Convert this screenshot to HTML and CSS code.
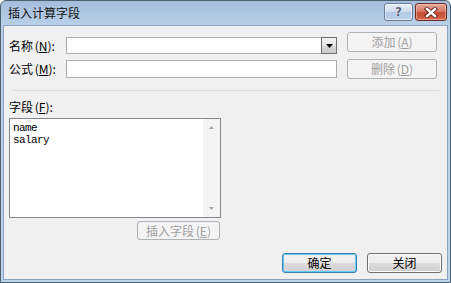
FILE: index.html
```html
<!DOCTYPE html>
<html lang="zh-CN">
<head>
    <meta charset="UTF-8">
    <title>插入计算字段</title>
    <link rel="stylesheet" href="styles.css">
</head>
<body>

<div class="dialog">
    <div class="titlebar">
        <span class="title">插入计算字段</span>
        <div class="caption-buttons">
            <div class="cap help"><span>?</span></div>
            <div class="cap close">
                <svg width="14" height="11" viewBox="0 0 14 11">
                    <path d="M3 2 L11 9 M11 2 L3 9" stroke="#5a1d12" stroke-width="4.2" stroke-linecap="square"/>
                    <path d="M3 2 L11 9 M11 2 L3 9" stroke="#ffffff" stroke-width="2.4" stroke-linecap="square"/>
                </svg>
            </div>
        </div>
    </div>

    <div class="client">
        <div class="top">
            <div class="fields">
                <label>名称 (<u>N</u>):</label>
                <div class="combo">
                    <span class="combo-btn">
                        <svg width="7" height="4" viewBox="0 0 7 4"><path d="M0 0 H7 L3.5 4 Z" fill="#000"/></svg>
                    </span>
                </div>
                <label>公式 (<u>M</u>):</label>
                <div class="textbox"></div>
            </div>
            <div class="actions">
                <button class="btn disabled">添加 (<u>A</u>)</button>
                <button class="btn disabled">删除 (<u>D</u>)</button>
            </div>
        </div>

        <div class="separator"></div>

        <div class="list-label">字段 (<u>F</u>):</div>
        <div class="list-area">
            <div class="listbox">
                <ul class="items">
                    <li>name</li>
                    <li>salary</li>
                </ul>
                <div class="scrollbar">
                    <span class="arrow"><svg width="5" height="3" viewBox="0 0 5 3"><path d="M2.5 0 L5 3 H0 Z" fill="#a6a6a6"/></svg></span>
                    <span class="arrow"><svg width="5" height="3" viewBox="0 0 5 3"><path d="M0 0 H5 L2.5 3 Z" fill="#a6a6a6"/></svg></span>
                </div>
            </div>
            <button class="btn disabled insert">插入字段 (<u>E</u>)</button>
        </div>

        <div class="footer">
            <button class="btn default">确定</button>
            <button class="btn">关闭</button>
        </div>
    </div>
</div>

</body>
</html>
```

FILE: styles.css
```css
body {
    margin: 0;
    background-color: #ffffff;
    font-family: "Noto Sans CJK SC", "Noto Sans", sans-serif;
    font-size: 12px;
    color: #000000;
}

.dialog {
    width: 451px;
    height: 283px;
    box-sizing: border-box;
    border: 1px solid #4f5f72;
    border-radius: 6px 6px 0 0;
    background: linear-gradient(180deg, #a5bddb 0px, #bad0e9 24px, #bcd3ec 100%);
    padding: 0 2px 2px 2px;
    display: flex;
    flex-direction: column;
}

.titlebar {
    height: 24px;
    display: flex;
    justify-content: space-between;
    align-items: flex-start;
}

.title {
    padding-left: 5px;
    line-height: 24px;
    font-size: 12px;
    color: #111111;
}

.caption-buttons {
    display: flex;
    gap: 2px;
    margin-top: 2px;
    margin-right: 1px;
}

.cap {
    height: 18px;
    box-sizing: border-box;
    border-radius: 3px;
    display: flex;
    align-items: center;
    justify-content: center;
}

.help {
    width: 29px;
    border: 1px solid #6b7e98;
    background: linear-gradient(180deg, #e6eef8 0%, #ccdbed 50%, #b3c8e2 51%, #bcd1ea 100%);
    box-shadow: inset 0 0 0 1px rgba(255, 255, 255, 0.5);
}

.help span {
    font-family: "DejaVu Sans", sans-serif;
    font-weight: bold;
    font-size: 12px;
    line-height: 12px;
    color: #56657a;
    text-shadow: 0 0 1px #ffffff, 0 0 1px #ffffff;
}

.close {
    width: 32px;
    border: 1px solid #6e2a20;
    background: linear-gradient(180deg, #e8a999 0%, #d77a66 45%, #c64a33 55%, #d06a52 100%);
    box-shadow: inset 0 0 0 1px rgba(255, 220, 210, 0.45);
}

.client {
    flex: 1;
    background-color: #f0f0f0;
    border: 1px solid #8aa3c0;
    display: flex;
    flex-direction: column;
    padding: 0 5px 0 5px;
}

.top {
    display: flex;
}

.fields {
    display: grid;
    grid-template-columns: 57px 271px;
    row-gap: 3px;
    align-items: center;
    margin-top: 10px;
}

.fields label {
    line-height: 14px;
    word-spacing: -1px;
}

u {
    text-decoration: underline;
    text-underline-offset: 1px;
}

.combo {
    height: 17px;
    box-sizing: border-box;
    border: 1px solid #abadb3;
    background-color: #ffffff;
    display: flex;
    justify-content: flex-end;
}

.combo-btn {
    width: 16px;
    margin: -1px -1px -1px 0;
    box-sizing: border-box;
    border: 1px solid #6f6f6f;
    background: linear-gradient(180deg, #f4f4f4 0%, #e6e6e6 50%, #d6d6d6 51%, #cccccc 100%);
    display: flex;
    align-items: center;
    justify-content: center;
}

.textbox {
    height: 18px;
    box-sizing: border-box;
    border: 1px solid #abadb3;
    background-color: #ffffff;
}

.actions {
    display: flex;
    flex-direction: column;
    gap: 7px;
    margin-top: 6px;
    margin-left: 10px;
}

.btn {
    font-family: "Noto Sans CJK SC", "Noto Sans", sans-serif;
    font-size: 12px;
    line-height: 14px;
    padding: 0;
    height: 20px;
    box-sizing: border-box;
    border: 1px solid #707070;
    border-radius: 3px;
    background: linear-gradient(180deg, #f2f2f2 0%, #ebebeb 50%, #dddddd 51%, #cfcfcf 100%);
    box-shadow: inset 0 0 0 1px #fbfbfb;
    color: #000000;
    word-spacing: -1px;
}

.actions .btn {
    width: 90px;
}

.btn.disabled {
    border-color: #adb2b5;
    background: #f4f4f4;
    box-shadow: none;
    color: #a0a0a0;
}

.separator {
    height: 1px;
    background-color: #d5dfe5;
    margin: 11px 3px 0 4px;
}

.list-label {
    margin-top: 9px;
    line-height: 14px;
    word-spacing: -1px;
}

.list-area {
    width: 212px;
    display: flex;
    flex-direction: column;
    align-items: flex-end;
    margin-top: 4px;
}

.listbox {
    width: 212px;
    height: 100px;
    box-sizing: border-box;
    border: 1px solid #828790;
    background-color: #ffffff;
    display: flex;
    justify-content: space-between;
}

.items {
    list-style: none;
    margin: 0;
    padding: 3px 0 0 3px;
    font-family: "Liberation Mono", monospace;
    font-size: 11px;
    letter-spacing: -0.6px;
    line-height: 12px;
}

.scrollbar {
    width: 17px;
    background-color: #f4f4f4;
    display: flex;
    flex-direction: column;
    justify-content: space-between;
}

.arrow {
    height: 17px;
    display: flex;
    align-items: center;
    justify-content: center;
}

.insert {
    width: 83px;
    height: 19px;
    margin-top: 3px;
    margin-right: 1px;
}

.footer {
    display: flex;
    justify-content: flex-end;
    gap: 10px;
    margin-top: 13px;
}

.footer .btn {
    width: 75px;
}

.btn.default {
    border-color: #3c7fb1;
    box-shadow: inset 0 0 0 1px #5fcbf4;
}
```
